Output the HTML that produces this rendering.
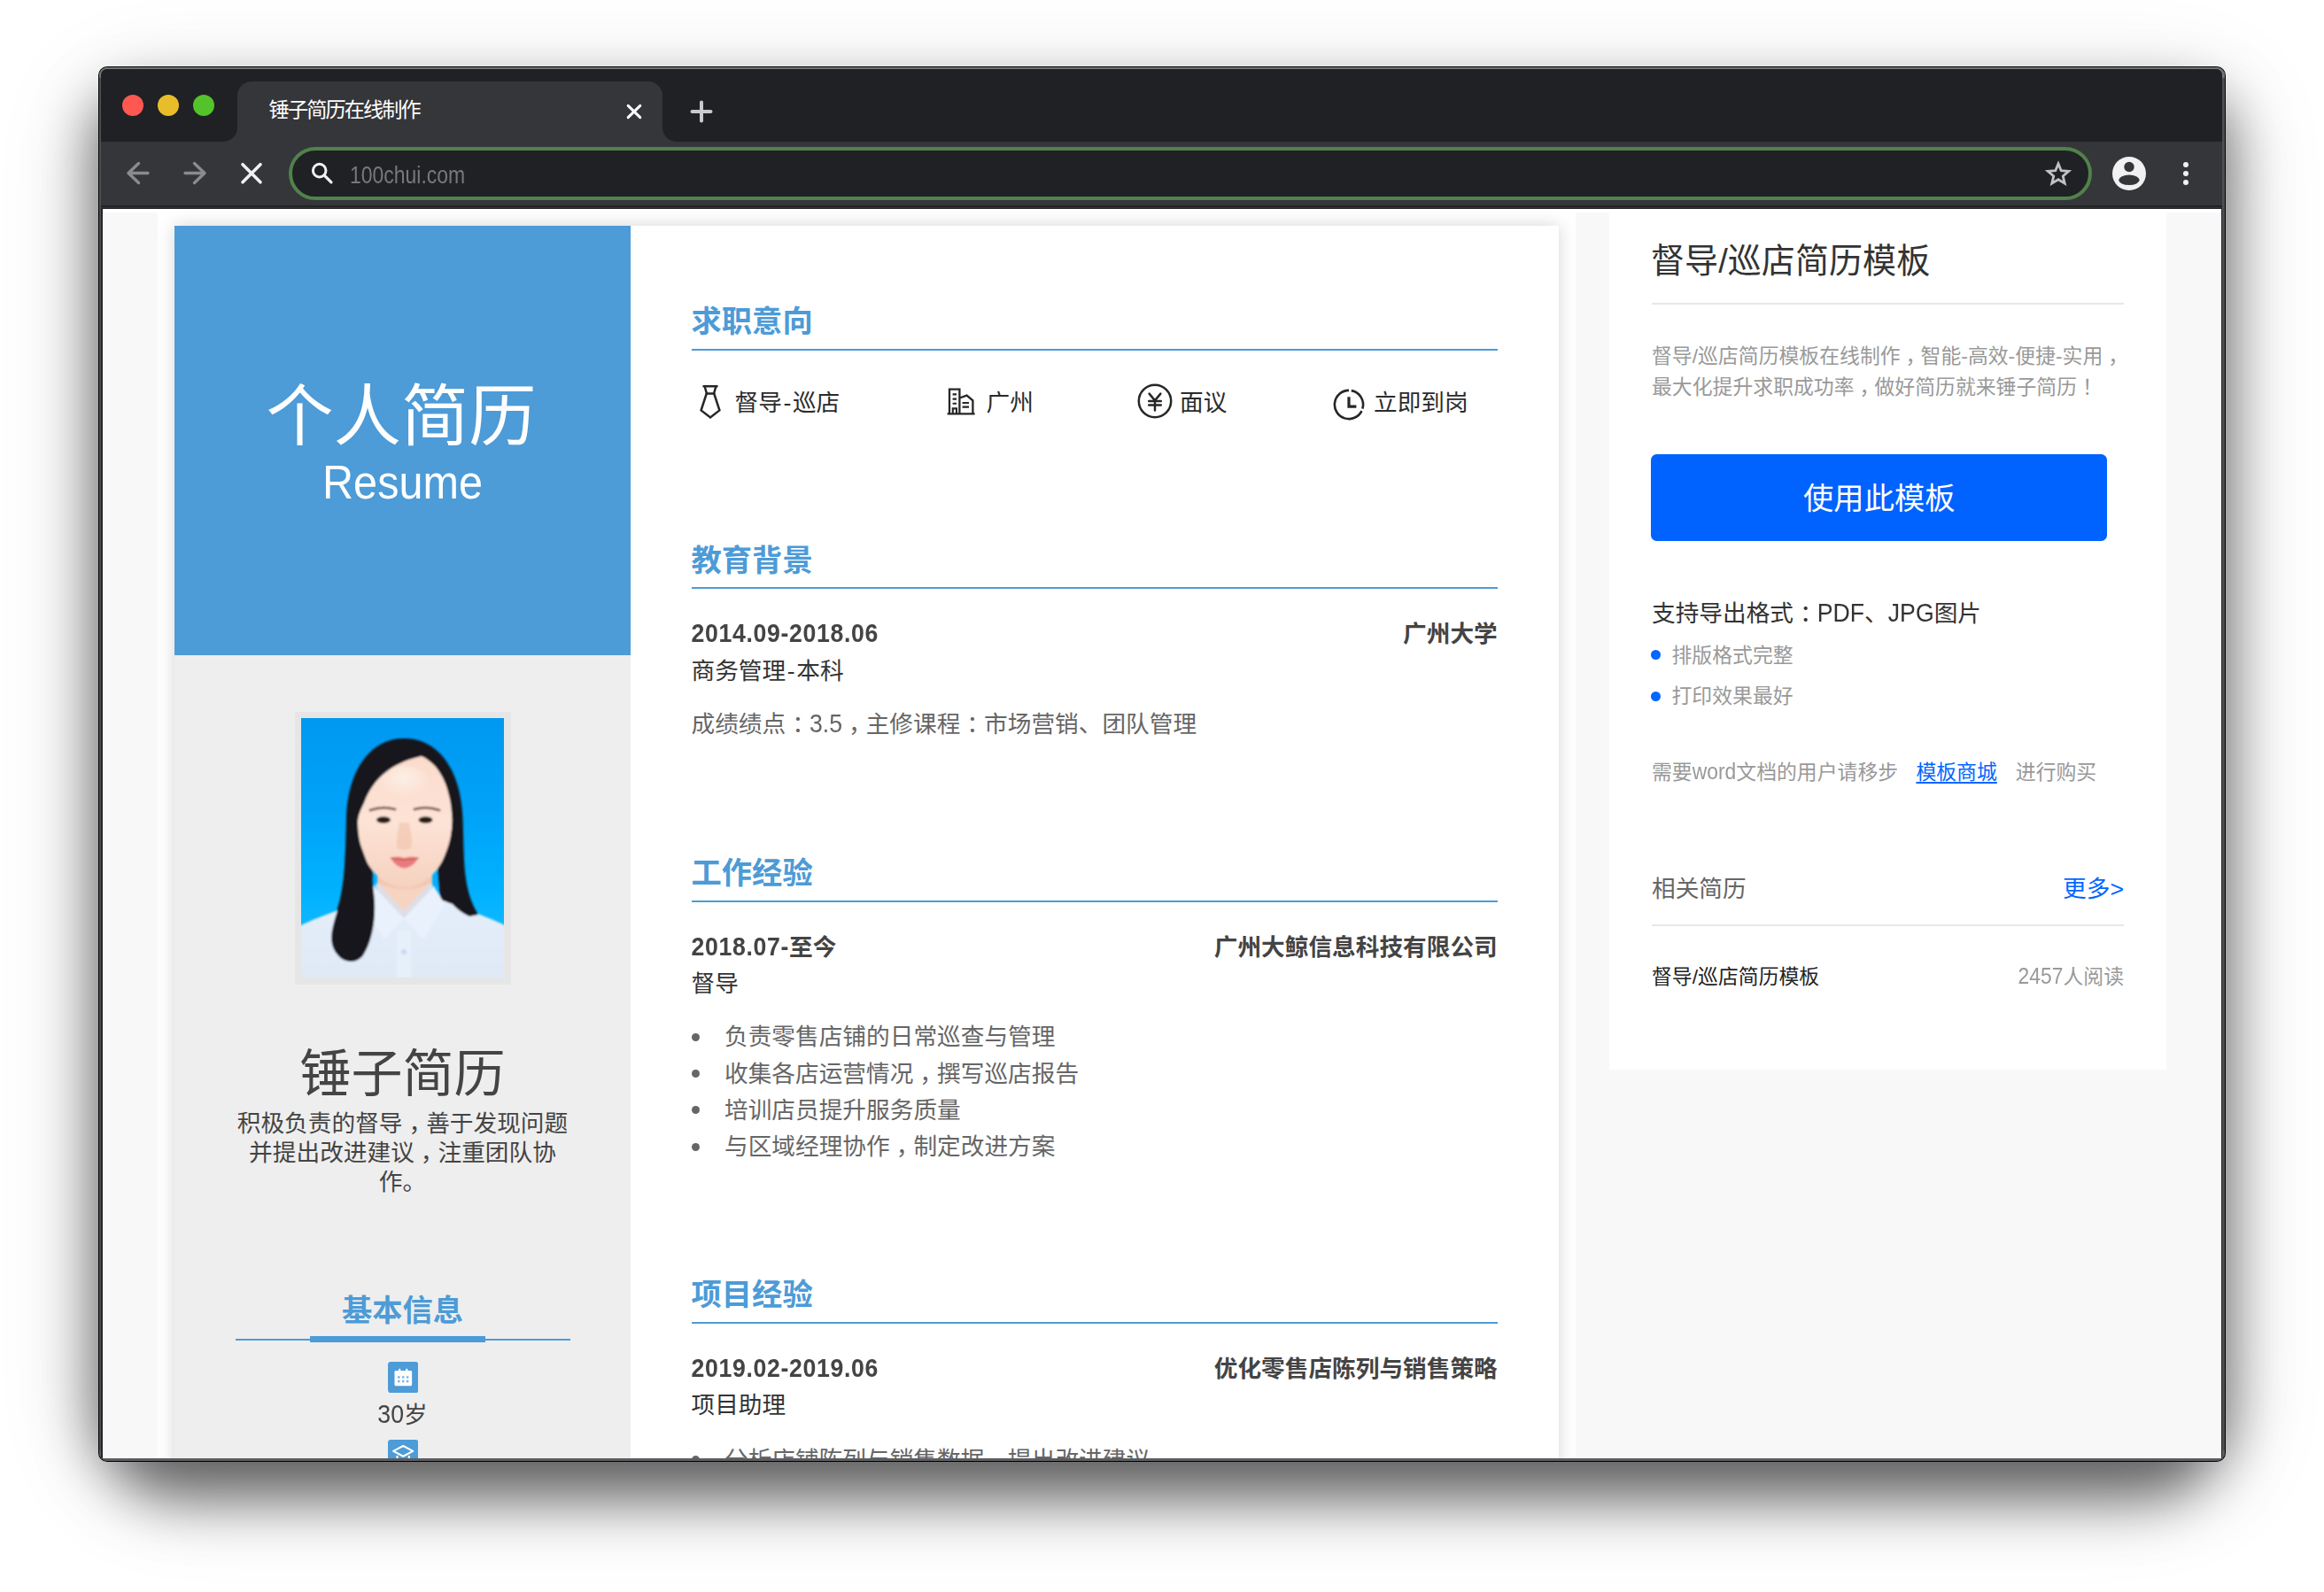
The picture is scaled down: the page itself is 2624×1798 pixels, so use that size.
<!DOCTYPE html>
<html lang="zh-CN">
<head>
<meta charset="utf-8">
<title>锤子简历在线制作</title>
<style>
*{box-sizing:border-box;margin:0;padding:0}
html,body{width:2624px;height:1798px;overflow:hidden;background:#fff}
body{position:relative;font-family:"Liberation Sans","Noto Sans CJK SC",sans-serif;color:#333}
.abs,.t{position:absolute}
.t{white-space:nowrap;line-height:40px;height:40px}
/* window */
#shadow{position:absolute;left:121px;top:85px;width:2382px;height:1556px;border-radius:30px 30px 80px 80px;
  box-shadow:0 38px 64px 12px rgba(0,0,0,.57),0 30px 110px 12px rgba(0,0,0,.17)}
#win{position:absolute;left:111px;top:75px;width:2402px;height:1576px;border-radius:10px;background:#000;overflow:hidden}
#frame{position:absolute;left:1px;top:1px;right:1px;bottom:1px;border-radius:9px;background:#4d4e52;overflow:hidden}
#inner{position:absolute;left:2px;top:2px;right:3px;bottom:3px;border-radius:7px 7px 2px 2px;background:#25262a;overflow:hidden}
#page{position:absolute;left:116px;top:236px;width:2392px;height:1411px;background:#f8f8f8;overflow:hidden}
#pg{position:absolute;left:-116px;top:-236px;width:2624px;height:1798px}
#chrome{position:absolute;left:0;top:0;width:2624px;height:1798px}
/* fonts */
.f14{font-size:26.68px}
.f12{font-size:22.87px}
.f18{font-size:34.31px}
.b{font-weight:700}
.blue{color:#4d9bd7}
.c3{color:#333}.c4{color:#444}.c6{color:#666}.c9{color:#999}
.r{text-align:right}
.hl{position:absolute;left:780.5px;width:910.3px;height:2px;background:#4d9bd7}
.cm{position:relative;left:.26em}
.hy{margin:0 1.6px}
.hy2{margin:0}
.lt{display:inline-block;transform:scaleY(1.1);transform-origin:0 73%}
.dot{position:absolute;width:9px;height:9px;border-radius:50%;background:#666}
</style>
</head>
<body>
<div id="shadow"></div>
<div id="win"><div id="frame"><div class="abs" style="left:0;right:0;top:0;height:12px;background:#737478"></div><div class="abs" style="left:0;right:0;bottom:0;height:12px;background:#5c5d61"></div><div id="inner"></div></div></div>

<!-- ============ browser chrome ============ -->
<div id="chrome">
  <div class="abs" id="titlebar" style="left:114px;top:78px;width:2395px;height:82px;background:#202124;border-radius:7px 7px 0 0"></div>
  <div class="abs" id="toolbar" style="left:114px;top:160px;width:2395px;height:72px;background:#35363a"></div>
  <div class="abs" style="left:114px;top:232px;width:2395px;height:2px;background:#232323"></div>
  <div class="abs" style="left:114px;top:234px;width:2395px;height:1px;background:#313236"></div>
  <!-- traffic lights -->
  <div class="abs" style="left:138px;top:107px;width:24px;height:24px;border-radius:50%;background:#fe5850"></div>
  <div class="abs" style="left:178px;top:107px;width:24px;height:24px;border-radius:50%;background:#e9bd29"></div>
  <div class="abs" style="left:218px;top:107px;width:24px;height:24px;border-radius:50%;background:#53c22b"></div>
  <!-- active tab -->
  <div class="abs" style="left:268px;top:92px;width:480px;height:68px;background:#35363a;border-radius:16px 16px 0 0"></div>
  <svg class="abs" style="left:252px;top:144px" width="16" height="16" viewBox="0 0 16 16"><path d="M16 0V16H0A16 16 0 0 0 16 0Z" fill="#35363a"/></svg>
  <svg class="abs" style="left:748px;top:144px" width="16" height="16" viewBox="0 0 16 16"><path d="M0 0V16H16A16 16 0 0 1 0 0Z" fill="#35363a"/></svg>
  <div class="t" style="left:303.6px;top:104.4px;font-size:23.2px;letter-spacing:-1.9px;color:#fff;font-family:'Liberation Sans','Noto Sans CJK SC',sans-serif">锤子简历在线制作</div>
  <svg class="abs" style="left:704px;top:114px" width="24" height="24" viewBox="0 0 24 24"><path d="M5.2 5.4L18.8 18.6M18.8 5.4L5.2 18.6" stroke="#fff" stroke-width="3" stroke-linecap="round" fill="none"/></svg>
  <svg class="abs" style="left:776px;top:110px" width="32" height="32" viewBox="0 0 32 32"><path d="M16 5.5V26.5M5.5 16H26.5" stroke="#c9cacd" stroke-width="4" stroke-linecap="round" fill="none"/></svg>
  <!-- nav buttons -->
  <svg class="abs" style="left:140px;top:180px" width="32" height="32" viewBox="0 0 32 32"><path d="M27 15.5H5M16.5 4.5L5 15.5L16.5 26.5" stroke="#8a8b8e" stroke-width="3.4" stroke-linecap="round" stroke-linejoin="round" fill="none"/></svg>
  <svg class="abs" style="left:204px;top:180px" width="32" height="32" viewBox="0 0 32 32"><path d="M5 15.5H27M15.5 4.5L27 15.5L15.5 26.5" stroke="#8a8b8e" stroke-width="3.4" stroke-linecap="round" stroke-linejoin="round" fill="none"/></svg>
  <svg class="abs" style="left:268px;top:180px" width="32" height="32" viewBox="0 0 32 32"><path d="M6 5.7L26 25.8M26 5.7L6 25.8" stroke="#f1f1f2" stroke-width="3.6" stroke-linecap="round" fill="none"/></svg>
  <!-- address bar -->
  <div class="abs" style="left:326px;top:166px;width:2036px;height:60px;border-radius:30px;border:4px solid #50824b;background:#202124"></div>
  <svg class="abs" style="left:344px;top:178px" width="36" height="36" viewBox="0 0 36 36"><circle cx="16.7" cy="14.6" r="7.3" stroke="#f1f1f2" stroke-width="3" fill="none"/><path d="M22 19.9L30 27.9" stroke="#f1f1f2" stroke-width="3.2" stroke-linecap="round"/></svg>
  <div class="t" style="left:394.5px;top:178px;font-size:28px;color:#77787c;transform-origin:0 50%;transform:scaleX(.82)">100chui.com</div>
  <svg class="abs" style="left:2306px;top:177.5px" width="36" height="36" viewBox="0 0 36 36"><path d="M18.00 6.90L21.23 14.75L29.70 15.40L23.23 20.90L25.23 29.15L18.00 24.70L10.77 29.15L12.77 20.90L6.30 15.40L14.77 14.75Z" stroke="#c0c1c5" stroke-width="2.8" stroke-linejoin="miter" fill="none"/></svg>
  <svg class="abs" style="left:2384px;top:176px" width="40" height="40" viewBox="0 0 40 40"><circle cx="20" cy="20" r="19" fill="#f1f1f2"/><circle cx="20" cy="12.5" r="5.7" fill="#35363a"/><ellipse cx="20" cy="27.3" rx="11.6" ry="5.8" fill="#35363a"/></svg>
  <div class="abs" style="left:2464.7px;top:182.8px;width:6.6px;height:6.6px;border-radius:50%;background:#f1f1f2"></div>
  <div class="abs" style="left:2464.7px;top:192.8px;width:6.6px;height:6.6px;border-radius:50%;background:#f1f1f2"></div>
  <div class="abs" style="left:2464.7px;top:202.8px;width:6.6px;height:6.6px;border-radius:50%;background:#f1f1f2"></div>
  <!--CHROME-->
</div>

<!-- ============ page content ============ -->
<div id="page"><div id="pg">
  <!-- top white strip + containers -->
  <div class="abs" style="left:116px;top:236px;width:2392px;height:4px;background:#fff"></div>
  <div class="abs" id="lwrap" style="left:178.4px;top:236px;width:1600.4px;height:1420px;background:#fff;overflow:hidden">
    <div class="abs" id="card" style="left:18.9px;top:19px;width:1562.6px;height:1500px;background:#fff;box-shadow:0 0 19px rgba(0,0,0,.17)"></div>
  </div>
  <!-- resume sidebar -->
  <div class="abs" style="left:197.3px;top:255px;width:514.5px;height:1400px;background:#eeeeee"></div>
  <div class="abs" style="left:197.3px;top:255px;width:514.5px;height:484.6px;background:#4d9bd7"></div>
  <div class="t" style="left:195.5px;top:421.2px;width:515px;height:100px;line-height:100px;text-align:center;font-size:76.2px;color:#fff">个人简历</div>
  <div class="t" style="left:196.5px;top:509.8px;width:515px;height:70px;line-height:70px;text-align:center;font-size:54.3px;color:#fff;transform:scaleX(.895)">Resume</div>
  <!-- photo -->
  <div class="abs" style="left:333px;top:804px;width:244px;height:308px;background:#e6e6e6"></div>
  <div class="abs" id="photo" style="left:340px;top:811px;width:229px;height:293px;overflow:hidden;background:linear-gradient(#0098f0 0%,#00a2f8 35%,#00b2ff 68%,#12b8ff 82%,#2abfff 100%)">
  <svg class="abs" style="left:0;top:0" width="229" height="293" viewBox="0 0 229 293">
    <defs>
      <filter id="pb" filterUnits="userSpaceOnUse" x="-30" y="-30" width="290" height="360"><feGaussianBlur stdDeviation="1.2"/></filter>
      <linearGradient id="sk" x1="0" y1="0" x2="0" y2="1"><stop offset="0" stop-color="#fbdccb"/><stop offset=".5" stop-color="#fde3d6"/><stop offset="1" stop-color="#f6d2c0"/></linearGradient>
      <linearGradient id="sh" x1="0" y1="0" x2="0" y2="1"><stop offset="0" stop-color="#e4eefa"/><stop offset="1" stop-color="#dfe9f6"/></linearGradient>
      <radialGradient id="hl" cx=".5" cy=".3" r=".5"><stop offset="0" stop-color="#fff" stop-opacity=".5"/><stop offset="1" stop-color="#fff" stop-opacity="0"/></radialGradient>
    </defs>
    <g filter="url(#pb)">
      <!-- hair silhouette -->
      <path d="M114 23C150 21 178 52 182 106C185 150 180 190 200 222L158 218L152 140L82 140L80 200C82 230 80 252 72 266C64 278 48 278 40 266C28 250 38 228 44 204C50 178 50 150 51 112C53 56 80 24 114 23Z" fill="#16151a"/>
      <!-- neck -->
      <path d="M86 160H148V212L116 236L86 212Z" fill="#f7d3c1"/>
      <path d="M86 186Q116 200 148 186V178H86Z" fill="#eec3ad" opacity=".7"/>
      <!-- shirt -->
      <path d="M-12 240C14 226 40 218 70 206L116 226L160 206C190 218 216 226 242 240V305H-12Z" fill="url(#sh)"/>
      <path d="M82 190L116 226L94 250L70 210ZM150 190L116 226L138 250L162 210Z" fill="#e9f2fc"/>
      <path d="M82 190L116 226L150 190L146 186L116 218L86 186Z" fill="#d5e2f1" opacity=".8"/>
      <path d="M108 240H124V305H108Z" fill="#e6f0fb"/>
      <circle cx="116" cy="264" r="3" fill="#c6daee"/>
      <!-- face -->
      <path d="M135.7 43C118 47 104 54 96 61C84 70 76 82 71 96C66 106 64 112 64 118C64 132 67 146 72 158C78 172 90 184 104 189C112 192 122 192 130 189C143 184 155 172 161 158C167 144 171 130 170.5 116C170 104 169 94 166.5 86C164 74 158 62 151 54C146 49 141 45 135.7 43Z" fill="url(#sk)"/>
      <ellipse cx="116" cy="76" rx="32" ry="22" fill="url(#hl)"/>
      <!-- left lock over shirt -->
      <path d="M50 150C49 180 47 198 42 214C36 234 29 252 40 266C48 277 62 278 70 268C79 254 84 232 83 208C82 192 80 178 74 162L66 140Z" fill="#16151a"/>
      <path d="M170.5 116C172 140 170 170 180 196L200 222L190 224C172 216 160 200 156 178C164 160 170 138 170.5 116Z" fill="#16151a"/>
      <!-- brows, eyes, nose, lips -->
      <path d="M78 104Q92 99 106 103M128 103Q142 99 156 104" stroke="#5d4037" stroke-width="3" fill="none" stroke-linecap="round" opacity=".75"/>
      <ellipse cx="93" cy="115" rx="8" ry="3.8" fill="#2a1a17"/>
      <ellipse cx="140.5" cy="115" rx="8" ry="3.8" fill="#2a1a17"/>
      <path d="M111 118Q106 142 109 147Q116 151 124 147Q127 142 122 118" fill="#efbfa8" opacity=".55"/>
      <path d="M101 158Q109 155 116.5 158Q124 155 132.5 158Q126 169 116.5 169.5Q107 169 101 158Z" fill="#ea7a80"/>
      <path d="M101 158Q116.5 162 132.5 158" stroke="#c4603f" stroke-width="1.6" fill="none"/>
    </g>
  </svg>
  <!--PHOTO-->
  </div>
  <div class="t c4" style="left:197px;top:1177.5px;width:515px;height:70px;line-height:70px;text-align:center;font-size:58px">锤子简历</div>
  <div class="t c4 f14" style="left:197px;top:1253.2px;width:515px;height:33.6px;line-height:33.6px;text-align:center">积极负责的督导<span class="cm">，</span>善于发现问题</div>
  <div class="t c4 f14" style="left:197px;top:1286.1px;width:515px;height:33.6px;line-height:33.6px;text-align:center">并提出改进建议<span class="cm">，</span>注重团队协</div>
  <div class="t c4 f14" style="left:197px;top:1319.2px;width:515px;height:33.6px;line-height:33.6px;text-align:center">作。</div>
  <div class="t blue b f18" style="left:197px;top:1454.8px;width:515px;height:50px;line-height:50px;text-align:center">基本信息</div>
  <div class="abs" style="left:266px;top:1512.4px;width:377.5px;height:2px;background:#4d9bd7"></div>
  <div class="abs" style="left:349.8px;top:1508.7px;width:198.4px;height:7.8px;background:#4d9bd7"></div>
  <svg class="abs" style="left:437.5px;top:1538.1px" width="34.4" height="35.2" viewBox="0 0 36 36" preserveAspectRatio="none"><rect width="36" height="36" rx="3.5" fill="#4d9bd7"/><rect x="7.8" y="10.2" width="20.6" height="17.6" rx="1.5" fill="#fff"/><rect x="12.6" y="8" width="2.4" height="5" rx="1" fill="#fff"/><rect x="21" y="8" width="2.4" height="5" rx="1" fill="#fff"/><g fill="#4d9bd7" opacity=".75"><rect x="11.6" y="16.6" width="2.6" height="2.4"/><rect x="16.7" y="16.6" width="2.6" height="2.4"/><rect x="21.8" y="16.6" width="2.6" height="2.4"/><rect x="11.6" y="21.4" width="2.6" height="2.4"/><rect x="16.7" y="21.4" width="2.6" height="2.4"/><rect x="21.8" y="21.4" width="2.6" height="2.4"/></g></svg>
  <div class="t c4 f14" style="left:197px;top:1578px;width:515px;text-align:center"><span class="lt">30</span>岁</div>
  <svg class="abs" style="left:437.5px;top:1626px" width="34.4" height="35.2" viewBox="0 0 36 36" preserveAspectRatio="none"><rect width="36" height="36" rx="3.5" fill="#4d9bd7"/><path d="M18 7.2L29.6 13.2L18 19.2L6.4 13.2Z" fill="none" stroke="#fff" stroke-width="2.2" stroke-linejoin="round"/><path d="M11 18.5V25C13 27.5 23 27.5 25 25V18.5" fill="none" stroke="#fff" stroke-width="2.2"/></svg>
  <!-- ===== main column ===== -->
  <div class="t blue b f18" style="left:780.5px;top:338px;height:50px;line-height:50px">求职意向</div>
  <div class="hl" style="top:393.6px"></div>
  <!-- intention icons -->
  <svg class="abs" style="left:787px;top:432px" width="30" height="43" viewBox="0 0 30 43"><path d="M7.5 4.2H22.5M8.6 4.5L11 12.4M21.4 4.5L19 12.4M10.4 12.4H19.6M10.6 13L4.6 31.4L15 39.4L25.4 31.4L19.4 13" fill="none" stroke="#262626" stroke-width="2.5" stroke-linejoin="miter" stroke-linecap="round"/></svg>
  <div class="t f14" style="left:829.5px;top:434.5px;color:#2b2b2b">督导<span class="hy">-</span>巡店</div>
  <svg class="abs" style="left:1067px;top:435px" width="36" height="36" viewBox="0 0 36 36"><path d="M5 32V4.6H16.4V32M16.4 14.5L24.6 11.6L31.4 17.4V32M2.6 32.4H33.6" fill="none" stroke="#262626" stroke-width="2.3" stroke-linejoin="miter"/><path d="M8.6 10.4H13M8.6 15.6H13M8.6 20.8H13M19.6 20H27M19.6 24.6H27M8.8 32V26.4H13V32" fill="none" stroke="#262626" stroke-width="2.1"/></svg>
  <div class="t f14" style="left:1113.5px;top:434.5px;color:#2b2b2b">广州</div>
  <svg class="abs" style="left:1283px;top:432px" width="42" height="42" viewBox="0 0 42 42"><circle cx="21" cy="21" r="18.2" fill="none" stroke="#262626" stroke-width="2.5"/><path d="M14.6 12.6L21 20.4L27.4 12.6M21 20.4V31.4M14.2 21H27.8M14.2 25.6H27.8" fill="none" stroke="#262626" stroke-width="2.5" stroke-linecap="round"/></svg>
  <div class="t f14" style="left:1332px;top:434.5px;color:#2b2b2b">面议</div>
  <svg class="abs" style="left:1502.5px;top:436.5px" width="40" height="40" viewBox="0 0 40 40"><path d="M34.47 27.06A16.1 16.1 0 1 1 20 3.9" fill="none" stroke="#262626" stroke-width="2.6"/><path d="M22.8 4.14A16.1 16.1 0 0 1 35.4 24.7" fill="none" stroke="#262626" stroke-width="2.6"/><path d="M20 11.2V22.2H28.4" fill="none" stroke="#262626" stroke-width="3.2"/></svg>
  <div class="t f14" style="left:1551px;top:434.5px;color:#2b2b2b">立即到岗</div>

  <div class="t blue b f18" style="left:780.5px;top:607.6px;height:50px;line-height:50px">教育背景</div>
  <div class="hl" style="top:663.2px"></div>
  <div class="t b f14 c4" style="left:780.5px;top:696px"><span class="lt" style="letter-spacing:.65px">2014.09-2018.06</span></div>
  <div class="t b f14 c4 r" style="left:1290.8px;width:400px;top:696px">广州大学</div>
  <div class="t f14 c3" style="left:780.5px;top:737.8px">商务管理<span class="hy">-</span>本科</div>
  <div class="t f14 c6" style="left:780.5px;top:798px">成绩绩点<span class="cm">：</span><span class="lt">3.5</span><span class="cm">，</span>主修课程<span class="cm">：</span>市场营销、团队管理</div>

  <div class="t blue b f18" style="left:780.5px;top:960.8px;height:50px;line-height:50px">工作经验</div>
  <div class="hl" style="top:1016.8px"></div>
  <div class="t b f14 c4" style="left:780.5px;top:1049.8px"><span class="lt" style="letter-spacing:.65px">2018.07-</span>至今</div>
  <div class="t b f14 c4 r" style="left:1290.8px;width:400px;top:1049.8px">广州大鲸信息科技有限公司</div>
  <div class="t f14 c3" style="left:780.5px;top:1091px">督导</div>
  <div class="dot" style="left:780.7px;top:1167px"></div>
  <div class="t f14 c6" style="left:818px;top:1151.4px">负责零售店铺的日常巡查与管理</div>
  <div class="dot" style="left:780.7px;top:1208.2px"></div>
  <div class="t f14 c6" style="left:818px;top:1192.6px">收集各店运营情况<span class="cm">，</span>撰写巡店报告</div>
  <div class="dot" style="left:780.7px;top:1249.4px"></div>
  <div class="t f14 c6" style="left:818px;top:1233.8px">培训店员提升服务质量</div>
  <div class="dot" style="left:780.7px;top:1290.6px"></div>
  <div class="t f14 c6" style="left:818px;top:1275px">与区域经理协作<span class="cm">，</span>制定改进方案</div>

  <div class="t blue b f18" style="left:780.5px;top:1436.6px;height:50px;line-height:50px">项目经验</div>
  <div class="hl" style="top:1492.6px"></div>
  <div class="t b f14 c4" style="left:780.5px;top:1525.5px"><span class="lt" style="letter-spacing:.65px">2019.02-2019.06</span></div>
  <div class="t b f14 c4 r" style="left:1290.8px;width:400px;top:1525.5px">优化零售店陈列与销售策略</div>
  <div class="t f14 c3" style="left:780.5px;top:1566.7px">项目助理</div>
  <div class="dot" style="left:780.7px;top:1644.3px"></div>
  <div class="t f14 c6" style="left:818px;top:1628.7px">分析店铺陈列与销售数据<span class="cm">，</span>提出改进建议</div>

  <!-- ===== right panel ===== -->
  <div class="abs" style="left:1817px;top:236px;width:628.5px;height:972px;background:#fff"></div>
  <div class="t c3" style="left:1864px;top:270px;height:50px;line-height:50px;font-size:38.1px">督导/巡店简历模板</div>
  <div class="abs" style="left:1865px;top:342px;width:533px;height:2px;background:#e8e8e8"></div>
  <div class="t f12 c9" style="left:1865px;top:381.5px">督导<span class="hy2">/</span>巡店简历模板在线制作<span class="cm">，</span>智能<span class="hy2">-</span>高效<span class="hy2">-</span>便捷<span class="hy2">-</span>实用<span class="cm">，</span></div>
  <div class="t f12 c9" style="left:1865px;top:416.5px">最大化提升求职成功率<span class="cm">，</span>做好简历就来锤子简历<span class="cm">！</span></div>
  <div class="abs" style="left:1864.3px;top:512.7px;width:514.3px;height:98px;border-radius:6.5px;background:#0062ff"></div>
  <div class="t f18" style="left:1865px;top:537.5px;width:513.6px;height:50px;line-height:50px;text-align:center;color:#fff">使用此模板</div>
  <div class="t f14 c3" style="left:1865px;top:672.8px">支持导出格式<span class="cm">：</span><span class="lt">PDF</span>、<span class="lt">JPG</span>图片</div>
  <div class="abs" style="left:1864.4px;top:734.1px;width:11px;height:11px;border-radius:50%;background:#0066ff"></div>
  <div class="t f12 c9" style="left:1887.5px;top:719.6px">排版格式完整</div>
  <div class="abs" style="left:1864.4px;top:780.5px;width:11px;height:11px;border-radius:50%;background:#0066ff"></div>
  <div class="t f12 c9" style="left:1887.5px;top:766px">打印效果最好</div>
  <div class="t f12 c9" style="left:1865px;top:851.6px">需要<span class="lt">word</span>文档的用户请移步</div>
  <div class="t f12" style="left:2163.4px;top:851.6px;color:#0066ff;text-decoration:underline;text-decoration-thickness:2px;text-underline-offset:3px">模板商城</div>
  <div class="t f12 c9" style="left:2275.8px;top:851.6px">进行购买</div>
  <div class="t f14 c6" style="left:1865px;top:983.5px">相关简历</div>
  <div class="t f14 r" style="left:1998px;width:400px;top:983.5px;color:#0066ff">更多&gt;</div>
  <div class="abs" style="left:1865px;top:1044px;width:533px;height:2px;background:#e8e8e8"></div>
  <div class="t f12" style="left:1865px;top:1082.6px;color:#222">督导/巡店简历模板</div>
  <div class="t f12 c9 r" style="left:1998px;width:400px;top:1082.6px"><span class="lt">2457</span>人阅读</div>
  <!--PAGE-->
</div></div>
</body>
</html>
